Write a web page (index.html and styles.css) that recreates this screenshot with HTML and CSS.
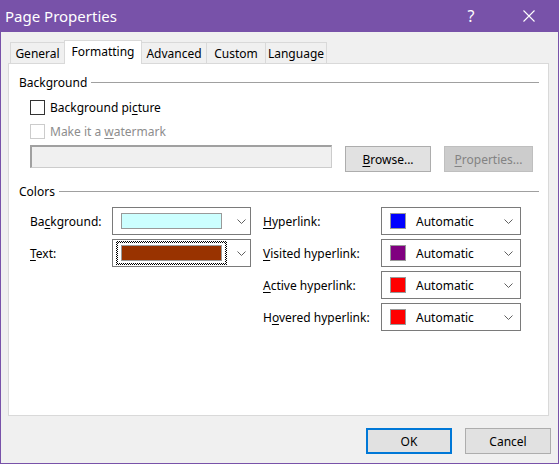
FILE: index.html
```html
<!DOCTYPE html>
<html>
<head>
<meta charset="utf-8">
<title>Page Properties</title>
<link rel="stylesheet" href="styles.css">
</head>
<body>
<div class="window">
  <div class="titlebar">
    <div class="title">Page Properties</div>
    <div class="caption-btn help">?</div>
    <div class="caption-btn close">
      <svg width="12" height="12" viewBox="0 0 12 12"><path d="M0.5 0.5 L11.5 11.5 M11.5 0.5 L0.5 11.5" stroke="#fff" stroke-width="1.1" fill="none"/></svg>
    </div>
  </div>
  <div class="main">
    <div class="tabs">
      <div class="tab t-general">General</div>
      <div class="tab t-formatting active">Formatting</div>
      <div class="tab t-advanced">Advanced</div>
      <div class="tab t-custom">Custom</div>
      <div class="tab t-language">Language</div>
    </div>
    <div class="panel">
      <div class="group-head"><span class="txt">Background</span><div class="rule"></div></div>
      <div class="check-row first"><div class="box"></div><span class="txt">Background pi<u>c</u>ture</span></div>
      <div class="check-row disabled"><div class="box"></div><span class="txt">Make it a <u>w</u>atermark</span></div>
      <div class="file-row">
        <div class="field"></div>
        <div class="btn browse"><span class="txt"><u>B</u>rowse...</span></div>
        <div class="btn props disabled"><span class="txt"><u>P</u>roperties...</span></div>
      </div>
      <div class="group-head colors"><span class="txt">Colors</span><div class="rule"></div></div>
      <div class="color-grid">
        <div class="lbl"><span class="txt">Ba<u>c</u>kground:</span></div>
        <div class="combo wide"><div class="swatch long cyan"></div><span class="chev"><svg width="9" height="5" viewBox="0 0 9 5"><path d="M0.5 0.5 L4.5 4.5 L8.5 0.5" stroke="#606060" fill="none"/></svg></span></div>
        <div></div>
        <div class="lbl"><span class="txt"><u>H</u>yperlink:</span></div>
        <div class="combo"><div class="swatch sq blue"></div><span class="auto txt">Automatic</span><span class="chev"><svg width="9" height="5" viewBox="0 0 9 5"><path d="M0.5 0.5 L4.5 4.5 L8.5 0.5" stroke="#606060" fill="none"/></svg></span></div>

        <div class="lbl"><span class="txt"><u>T</u>ext:</span></div>
        <div class="combo wide focus"><div class="focusring"><div class="focusinner"><div class="swatch long brown"></div></div></div><span class="chev"><svg width="9" height="5" viewBox="0 0 9 5"><path d="M0.5 0.5 L4.5 4.5 L8.5 0.5" stroke="#606060" fill="none"/></svg></span></div>
        <div></div>
        <div class="lbl"><span class="txt"><u>V</u>isited hyperlink:</span></div>
        <div class="combo"><div class="swatch sq purple"></div><span class="auto txt">Automatic</span><span class="chev"><svg width="9" height="5" viewBox="0 0 9 5"><path d="M0.5 0.5 L4.5 4.5 L8.5 0.5" stroke="#606060" fill="none"/></svg></span></div>

        <div></div><div></div><div></div>
        <div class="lbl"><span class="txt"><u>A</u>ctive hyperlink:</span></div>
        <div class="combo"><div class="swatch sq red"></div><span class="auto txt">Automatic</span><span class="chev"><svg width="9" height="5" viewBox="0 0 9 5"><path d="M0.5 0.5 L4.5 4.5 L8.5 0.5" stroke="#606060" fill="none"/></svg></span></div>

        <div></div><div></div><div></div>
        <div class="lbl"><span class="txt">H<u>o</u>vered hyperlink:</span></div>
        <div class="combo"><div class="swatch sq red"></div><span class="auto txt">Automatic</span><span class="chev"><svg width="9" height="5" viewBox="0 0 9 5"><path d="M0.5 0.5 L4.5 4.5 L8.5 0.5" stroke="#606060" fill="none"/></svg></span></div>
      </div>
    </div>
  </div>
  <div class="footer">
    <div class="btn ok"><span class="txt">OK</span></div>
    <div class="btn cancel"><span class="txt">Cancel</span></div>
  </div>
</div>
</body>
</html>
```

FILE: styles.css
```css
* { box-sizing: border-box; }
html, body { margin: 0; padding: 0; }
body {
  font-family: "Noto Sans", "Open Sans", sans-serif;
  font-size: 12px;
  line-height: 16px;
  color: #000;
  background: #fff;
}
u { text-decoration: underline; text-underline-offset: 2px; }
.txt { display: block; padding-top: 2px; height: 18px; }

.window {
  width: 559px;
  height: 464px;
  background: #f0f0f0;
  border: 1px solid #7852a9;
  border-top: none;
  display: flex;
  flex-direction: column;
}

.titlebar {
  height: 32px;
  background: #7852a9;
  display: flex;
  align-items: center;
  color: #fff;
  margin: 0 -1px;
  padding-left: 5px;
}
.title { font-size: 15px; flex: 1; line-height: 20px; }
.caption-btn {
  width: 46px;
  height: 32px;
  display: flex;
  align-items: center;
  justify-content: center;
}
.help { font-size: 16px; margin-right: 12px; }
.close { margin-right: 7px; }

.main {
  padding: 8px 9px 0 7px;
}

.tabs {
  display: flex;
  align-items: flex-end;
  height: 23px;
  padding-left: 2px;
}
.tab {
  height: 21px;
  border: 1px solid #d9d9d9;
  border-bottom: none;
  background: #f0f0f0;
  text-align: center;
  line-height: 20px;
  padding-top: 1px;
  margin-left: -1px;
}
.tab:first-child { margin-left: 0; }
.t-general { width: 55px; }
.t-formatting { width: 78px; }
.t-advanced { width: 66px; }
.t-custom { width: 60px; }
.t-language { width: 62px; }
.tab.active {
  height: 24px;
  background: #fff;
  position: relative;
  z-index: 1;
  margin-bottom: -1px;
  padding-top: 1px;
  padding-bottom: 2px;
}

.panel {
  height: 353px;
  background: #fff;
  border: 1px solid #d9d9d9;
  padding: 10px 9px 0 10px;
}

.group-head {
  display: flex;
  align-items: center;
  height: 16px;
  gap: 4px;
}
.group-head .rule { flex: 1; height: 1px; background: #a0a0a0; }
.group-head.colors { margin-top: 11px; }

.check-row {
  display: flex;
  align-items: center;
  height: 16px;
  margin-left: 11px;
  margin-top: 8px;
  gap: 5px;
}
.check-row.first { margin-top: 9px; }
.check-row .box {
  width: 15px;
  height: 15px;
  border: 1px solid #333;
  background: #fff;
}
.check-row.disabled { color: #8d8d8d; }
.check-row.disabled .box { border-color: #cccccc; }

.file-row {
  display: flex;
  align-items: flex-start;
  margin-left: 11px;
  margin-top: 6px;
  height: 27px;
}
.field {
  width: 302px;
  height: 23px;
  background: #f0f0f0;
  border: 1px solid #cccccc;
  border-top-color: #a0a0a0;
  border-left-color: #a0a0a0;
  border-top-width: 2px;
  border-left-width: 2px;
}

.btn {
  height: 26px;
  background: #e1e1e1;
  border: 1px solid #adadad;
  display: flex;
  align-items: center;
  justify-content: center;
  width: 86px;
}
.browse { margin-top: 1px; margin-left: 13px; }
.props { margin-top: 1px; margin-left: 13px; width: 89px; }
.btn.disabled { background: #cccccc; border-color: #bfbfbf; color: #838383; }

.color-grid {
  display: grid;
  grid-template-columns: 82px 139px 12px 118px 140px;
  grid-auto-rows: 28px;
  row-gap: 4px;
  margin-top: 8px;
  margin-left: 11px;
}
.lbl { display: flex; align-items: center; }

.combo {
  border: 1px solid #7a7a7a;
  background: #fff;
  display: flex;
  align-items: center;
  padding-left: 8px;
  position: relative;
}
.chev {
  position: absolute;
  right: 7px;
  top: 11px;
  width: 9px;
  height: 5px;
  display: flex;
}
.combo.wide .chev { right: 4px; }
.swatch { border: 1px solid #999; }
.swatch.long { width: 101px; height: 16px; }
.swatch.sq { width: 16px; height: 16px; }
.auto { margin-left: 10px; }
.cyan { background: #ccffff; }
.brown { background: #993300; }
.blue { background: #0000ff; }
.purple { background: #800080; }
.red { background: #ff0000; }

.combo.focus { padding-left: 3px; }
.focusring {
  width: 111px;
  height: 24px;
  padding: 2px;
  background: repeating-conic-gradient(#000 0 25%, #fff 0 50%) 0 0 / 2px 2px;
}
.focusinner {
  width: 107px;
  height: 20px;
  background: #fff;
  padding: 2px 3px;
}

.footer {
  display: flex;
  justify-content: flex-end;
  gap: 13px;
  padding: 12px 7px 0 0;
}
.btn.ok { border: 2px solid #0078d7; }
```
